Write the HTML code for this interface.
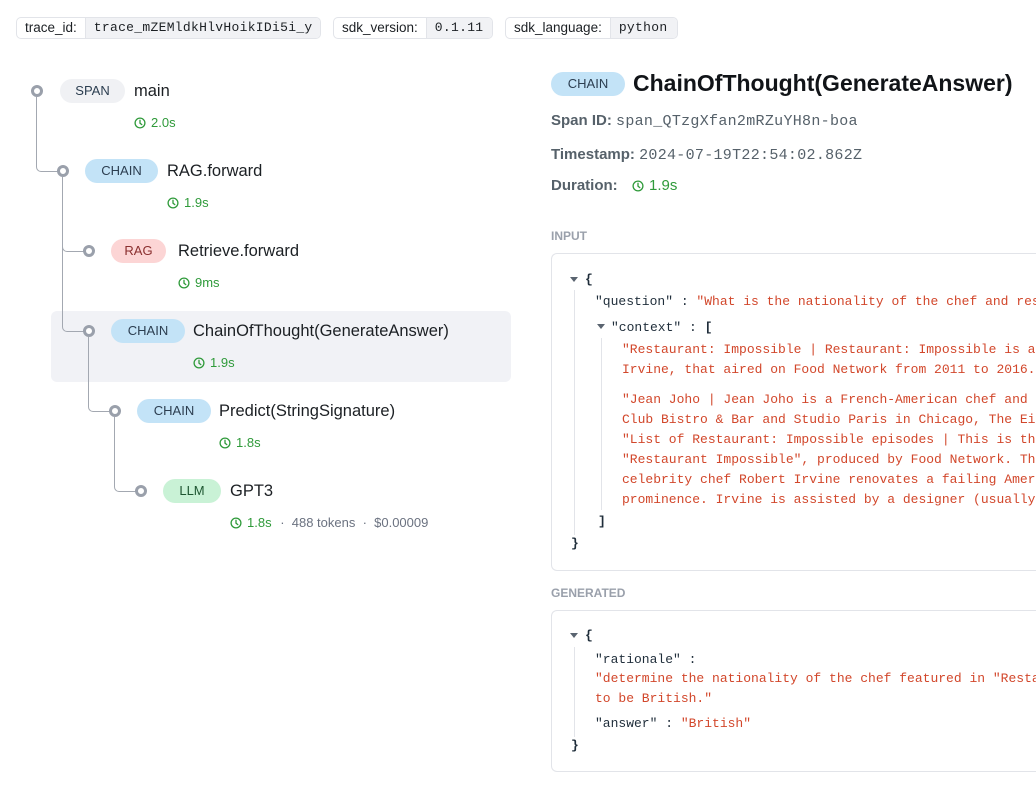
<!DOCTYPE html>
<html><head><meta charset="utf-8"><style>
*{margin:0;padding:0;box-sizing:border-box}
html,body{width:1036px;height:792px;overflow:hidden}
body{background:#fff;font-family:"Liberation Sans",sans-serif;color:#1c2024;position:relative}
#w{position:absolute;left:0;top:0;width:1036px;height:792px;overflow:hidden}
.a{position:absolute;white-space:nowrap}
.pill{position:absolute;top:17px;height:22px;border:1px solid #e2e4e9;border-radius:5px;display:flex;font-size:13.5px;line-height:20px;overflow:hidden;white-space:nowrap}
.pill .l{padding:0 8px;color:#1c2024}
.pill .v{background:#f1f2f5;border-left:1px solid #e2e4e9;padding:0 8px;font-family:"Liberation Mono",monospace;font-size:13px;letter-spacing:.3px}
.dot{position:absolute;width:12px;height:12px;border:3px solid #9aa0ab;border-radius:50%;background:#fff}
.ln{position:absolute;border-color:#a3a8b1;border-style:solid;border-width:0}
.b{position:absolute;height:24px;border-radius:12px;font-size:13px;line-height:24px;text-align:center;color:#2c3e50}
.chain{background:#c3e3f7}
.nm{position:absolute;font-size:16.5px;line-height:20px;color:#1c2024;white-space:nowrap}
.du{position:absolute;font-size:13px;line-height:16px;color:#2f9a3a;display:flex;align-items:center;gap:5px;white-space:nowrap}
.du svg{width:12px;height:12px}
.gr{color:#6b7280}
.lab{position:absolute;font-size:15px;font-weight:bold;color:#56616a;line-height:20px;white-space:nowrap}
.mono{font-family:"Liberation Mono",monospace}
.sec{position:absolute;left:551px;font-size:12px;font-weight:bold;color:#9aa0ab}
.box{position:absolute;left:551px;width:495px;border:1px solid #e2e4e9;border-right:none;border-radius:6px 0 0 6px}
.j{position:absolute;font-family:"Liberation Mono",monospace;font-size:13px;line-height:20px;letter-spacing:0;color:#1f2d3a;white-space:pre}
.s{color:#d2472b}
.tri{position:absolute;width:0;height:0;border-left:4px solid transparent;border-right:4px solid transparent;border-top:5px solid #5a6470}
.vl{position:absolute;width:1px;background:#e2e4e9}
</style></head><body><div id="w">
<div class="pill" style="left:16px;width:305px"><span class="l">trace_id:</span><span class="v" style="flex:1">trace_mZEMldkHlvHoikIDi5i_y</span></div>
<div class="pill" style="left:333px;width:160px"><span class="l">sdk_version:</span><span class="v" style="flex:1">0.1.11</span></div>
<div class="pill" style="left:505px;width:173px"><span class="l">sdk_language:</span><span class="v" style="flex:1">python</span></div>

<div style="position:absolute;left:51px;top:311px;width:460px;height:71px;background:#f1f2f6;border-radius:6px"></div>

<div class="ln" style="left:36px;top:97px;width:22px;height:75px;border-left-width:1px;border-bottom-width:1px;border-bottom-left-radius:5px"></div>
<div class="ln" style="left:62px;top:177px;width:22px;height:75px;border-left-width:1px;border-bottom-width:1px;border-bottom-left-radius:5px"></div>
<div class="ln" style="left:62px;top:240px;width:22px;height:92px;border-left-width:1px;border-bottom-width:1px;border-bottom-left-radius:5px"></div>
<div class="ln" style="left:88px;top:337px;width:22px;height:75px;border-left-width:1px;border-bottom-width:1px;border-bottom-left-radius:5px"></div>
<div class="ln" style="left:114px;top:417px;width:22px;height:75px;border-left-width:1px;border-bottom-width:1px;border-bottom-left-radius:5px"></div>

<div class="dot" style="left:31px;top:85px"></div>
<div class="dot" style="left:57px;top:165px"></div>
<div class="dot" style="left:83px;top:245px"></div>
<div class="dot" style="left:83px;top:325px"></div>
<div class="dot" style="left:109px;top:405px"></div>
<div class="dot" style="left:135px;top:485px"></div>

<div class="b" style="left:60px;top:79px;width:65px;background:#f0f1f4">SPAN</div>
<div class="nm" style="left:134px;top:81px">main</div>
<div class="b chain" style="left:85px;top:159px;width:73px">CHAIN</div>
<div class="nm" style="left:167px;top:161px">RAG.forward</div>
<div class="b" style="left:111px;top:239px;width:55px;background:#fcd5d5;color:#8a2f2f">RAG</div>
<div class="nm" style="left:178px;top:241px">Retrieve.forward</div>
<div class="b chain" style="left:111px;top:319px;width:74px">CHAIN</div>
<div class="nm" style="left:193px;top:321px">ChainOfThought(GenerateAnswer)</div>
<div class="b chain" style="left:137px;top:399px;width:74px">CHAIN</div>
<div class="nm" style="left:219px;top:401px">Predict(StringSignature)</div>
<div class="b" style="left:163px;top:479px;width:58px;background:#c9f2d6;color:#1e5631">LLM</div>
<div class="nm" style="left:230px;top:481px">GPT3</div>

<svg width="0" height="0" style="position:absolute"><defs><symbol id="clk" viewBox="0 0 12 12"><circle cx="6" cy="6" r="4.9" fill="none" stroke="#2f9a3a" stroke-width="1.3"/><path d="M6 3.3V6.2L7.8 7.6" fill="none" stroke="#2f9a3a" stroke-width="1.3" stroke-linecap="round"/></symbol></defs></svg>
<div class="du" style="left:134px;top:115px"><svg><use href="#clk"/></svg>2.0s</div>
<div class="du" style="left:167px;top:195px"><svg><use href="#clk"/></svg>1.9s</div>
<div class="du" style="left:178px;top:275px"><svg><use href="#clk"/></svg>9ms</div>
<div class="du" style="left:193px;top:355px"><svg><use href="#clk"/></svg>1.9s</div>
<div class="du" style="left:219px;top:435px"><svg><use href="#clk"/></svg>1.8s</div>
<div class="du" style="left:230px;top:515px"><svg><use href="#clk"/></svg>1.8s<span class="gr">&nbsp;·&nbsp; 488 tokens &nbsp;·&nbsp; $0.00009</span></div>

<div class="b chain" style="left:551px;top:72px;width:74px">CHAIN</div>
<div class="a" style="left:633px;top:69px;font-size:23px;font-weight:bold;line-height:28px;color:#111418">ChainOfThought(GenerateAnswer)</div>
<div class="lab" style="left:551px;top:111px">Span ID: <span class="mono" style="font-weight:normal;letter-spacing:.3px">span_QTzgXfan2mRZuYH8n-boa</span></div>
<div class="lab" style="left:551px;top:145px">Timestamp: <span class="mono" style="font-weight:normal;letter-spacing:.3px">2024-07-19T22:54:02.862Z</span></div>
<div class="lab" style="left:551px;top:176px">Duration: </div>
<div class="du" style="left:632px;top:178px;font-size:15px"><svg><use href="#clk"/></svg>1.9s</div>

<div class="sec" style="top:229px">INPUT</div>
<div class="box" style="top:253px;height:318px"></div>
<div class="tri" style="left:570px;top:277px"></div>
<div class="j" style="left:585px;top:270px;font-weight:bold">{</div>
<div class="vl" style="left:574px;top:290px;height:245px"></div>
<div class="j" style="left:595px;top:292px;width:441px;overflow:hidden">"question" : <span class="s">"What is the nationality of the chef and restaurant featured</span></div>
<div class="tri" style="left:597px;top:324px"></div>
<div class="j" style="left:611px;top:318px">"context" : <b>[</b></div>
<div class="vl" style="left:601px;top:338px;height:172px"></div>
<div class="j s" style="left:622px;top:340px;width:414px;overflow:hidden">"Restaurant: Impossible | Restaurant: Impossible is an American
Irvine, that aired on Food Network from 2011 to 2016."</div>
<div class="j s" style="left:622px;top:390px;width:414px;overflow:hidden">"Jean Joho | Jean Joho is a French-American chef and restaurateur
Club Bistro &amp; Bar and Studio Paris in Chicago, The Eiffel Tower</div>
<div class="j s" style="left:622px;top:430px;width:414px;overflow:hidden">"List of Restaurant: Impossible episodes | This is the list of
"Restaurant Impossible", produced by Food Network. The format
celebrity chef Robert Irvine renovates a failing American resta
prominence. Irvine is assisted by a designer (usually Taniya</div>
<div class="j" style="left:598px;top:512px;font-weight:bold">]</div>
<div class="j" style="left:571px;top:534px;font-weight:bold">}</div>

<div class="sec" style="top:586px">GENERATED</div>
<div class="box" style="top:610px;height:162px"></div>
<div class="tri" style="left:570px;top:633px"></div>
<div class="j" style="left:585px;top:626px;font-weight:bold">{</div>
<div class="vl" style="left:574px;top:647px;height:90px"></div>
<div class="j" style="left:595px;top:650px">"rationale" :</div>
<div class="j s" style="left:595px;top:669px;width:441px;overflow:hidden">"determine the nationality of the chef featured in "Restaurant:
to be British."</div>
<div class="j" style="left:595px;top:714px">"answer" : <span class="s">"British"</span></div>
<div class="j" style="left:571px;top:736px;font-weight:bold">}</div>
</div></body></html>
